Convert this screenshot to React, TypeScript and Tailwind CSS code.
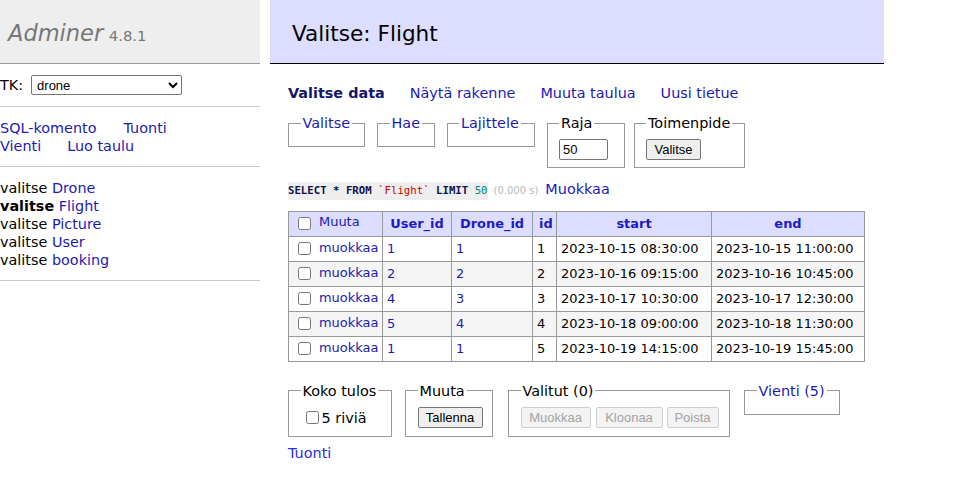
import { ReactNode } from "react";

const link = "text-[#1c1cb0]";

interface Flight {
  userId: number,
  droneId: number,
  id: number,
  start: string,
  end: string,
}

const flights: Flight[] = [
  { userId: 1, droneId: 1, id: 1, start: "2023-10-15 08:30:00", end: "2023-10-15 11:00:00" },
  { userId: 2, droneId: 2, id: 2, start: "2023-10-16 09:15:00", end: "2023-10-16 10:45:00" },
  { userId: 4, droneId: 3, id: 3, start: "2023-10-17 10:30:00", end: "2023-10-17 12:30:00" },
  { userId: 5, droneId: 4, id: 4, start: "2023-10-18 09:00:00", end: "2023-10-18 11:30:00" },
  { userId: 1, droneId: 1, id: 5, start: "2023-10-19 14:15:00", end: "2023-10-19 15:45:00" },
]

export default function App(): ReactNode {
  return (
    <div className="flex items-start bg-white text-black font-['DejaVu_Sans',Verdana,sans-serif] text-[14.4px] leading-[18px]">
      <Sidebar />
      <Content />
    </div>
  )
}

function Sidebar(): ReactNode {
  const tables = ["Drone", "Flight", "Picture", "User", "booking"]

  return (
    <aside className="w-[260px] shrink-0">
      <h1 className="h-[64px] bg-[#eee] border-b border-[#999] pl-[8px] pt-[20px] text-[#777] leading-[27px]">
        <span className="italic text-[22.5px]">Adminer</span>{" "}
        <span className="ml-[1px] text-[14.8px] text-[#777]">4.8.1</span>
      </h1>

      <div className="h-[43px] border-b border-[#ccc] flex items-center">
        <span>TK:</span>
        <select
          defaultValue="drone"
          className="ml-[8px] w-[151px] h-[20px] border border-[#767676] rounded-[2px] bg-white pl-[1px] text-[13px] font-['Liberation_Sans',Arial,sans-serif] text-black"
        >
          <option value="drone">drone</option>
        </select>
      </div>

      <div className="pt-[12px] pb-[11px] border-b border-[#ccc]">
        <div className="flex gap-[27px]">
          <a className={link}>SQL-komento</a>
          <a className={link}>Tuonti</a>
        </div>
        <div className="flex gap-[26px]">
          <a className={link}>Vienti</a>
          <a className={link}>Luo taulu</a>
        </div>
      </div>

      <ul className="pt-[12px] pb-[11px] border-b border-[#ccc]">
        {tables.map((table: string): ReactNode => {
          const active = table == "Flight"
          return (
            <li key={table}>
              <span className={active ? "font-bold" : ""}>valitse</span>{" "}
              <a className={link}>{table}</a>
            </li>
          )
        })}
      </ul>
    </aside>
  )
}

interface BoxProps {
  legend: string,
  isLink?: boolean,
  className?: string,
  children?: ReactNode,
}

function Box({ legend, isLink, className, children }: BoxProps): ReactNode {
  return (
    <fieldset className={`border border-[#999] px-[11.5px] py-[7px] ${className ?? ""}`}>
      <legend className={`px-[2px] ${isLink ? link : ""}`}>{legend}</legend>
      {children}
    </fieldset>
  )
}

interface ButtonProps {
  label: string,
  width: string,
  disabled?: boolean,
}

function Button({ label, width, disabled }: ButtonProps): ReactNode {
  const look = disabled ?
    "text-[#a3a3a3] bg-[#f3f3f3] border-[#cfcfcf]" :
    "text-black bg-[#efefef] border-[#767676]"
  return (
    <button className={`${width} h-[21px] border rounded-[2px] text-[13px] leading-[19px] text-center font-['Liberation_Sans',Arial,sans-serif] ${look}`}>
      {label}
    </button>
  )
}

function Content(): ReactNode {
  return (
    <main className="ml-[10px] w-[614px] shrink-0">
      <h2 className="h-[64px] bg-[#ddf] border-b border-black pl-[22px] pt-[4px] flex items-center text-[21.6px] leading-[27px]">
        Valitse: Flight
      </h2>

      <div className="pl-[18px]">
        <p className="mt-[20px] flex gap-[25px]">
          <a className="font-bold text-[#161668]">Valitse data</a>
          <a className={link}>Näytä rakenne</a>
          <a className={link}>Muuta taulua</a>
          <a className={link}>Uusi tietue</a>
        </p>

        <div className="mt-[12px] flex items-start">
          <Box legend="Valitse" isLink className="mr-[12px] w-[77px]" />
          <Box legend="Hae" isLink className="mr-[12px] w-[57px]" />
          <Box legend="Lajittele" isLink className="mr-[12px] w-[88px]" />
          <Box legend="Raja" className="mr-[9px] w-[78px]">
            <input
              defaultValue="50"
              className="block w-[49px] h-[21px] border border-[#767676] rounded-[2px] px-[3px] text-[13px] font-['Liberation_Sans',Arial,sans-serif]"
            />
          </Box>
          <Box legend="Toimenpide" className="w-[110px]">
            <Button label="Valitse" width="w-[55px]" />
          </Box>
        </div>

        <p className="mt-[11.5px] flex items-baseline">
          <code className="bg-[#eee] font-['DejaVu_Sans_Mono','Liberation_Mono',monospace] text-[10.7px] text-[#10104a]">
            <b>SELECT</b> <b>*</b> <b>FROM</b>{" "}
            <span className="text-[#d00000]">`Flight`</span>{" "}
            <b>LIMIT</b> <span className="text-[#008080]">50</span>
          </code>
          <span className="ml-[6px] text-[10px] text-[#b8b8b8]">(0.000 s)</span>
          <a className={`ml-[7px] ${link}`}>Muokkaa</a>
        </p>

        <FlightTable />

        <div className="mt-[20px] flex items-start">
          <Box legend="Koko tulos" className="mr-[13px] w-[104px]">
            <label className="flex items-center h-[22px] pl-[5px]">
              <input type="checkbox" className="m-0 w-[13px] h-[13px]" />
              <span className="ml-[3px]">5 riviä</span>
            </label>
          </Box>
          <Box legend="Muuta" className="mr-[15px] w-[88px] pr-[9px]">
            <div className="flex items-center h-[22px]">
              <Button label="Tallenna" width="w-[65px]" />
            </div>
          </Box>
          <Box legend="Valitut (0)" className="mr-[14px] w-[222px] pr-[10px]">
            <div className="flex items-center h-[22px]">
              <Button label="Muokkaa" width="w-[70px]" disabled />
              <span className="ml-[5px]" />
              <Button label="Kloonaa" width="w-[67px]" disabled />
              <span className="ml-[4px]" />
              <Button label="Poista" width="w-[52px]" disabled />
            </div>
          </Box>
          <Box legend="Vienti (5)" isLink className="w-[96px]" />
        </div>

        <p className="mt-[7px]">
          <a className="text-[#2b2be0]">Tuonti</a>
        </p>
      </div>
    </main>
  )
}

function FlightTable(): ReactNode {
  const cell = "border border-[#999] px-[4px] h-[25px] align-middle whitespace-nowrap"
  const head = "border border-[#999] px-[6px] h-[25px] align-middle text-center font-bold text-[#1c1cc4]"

  return (
    <table className="mt-[11px] table-fixed w-[576px] border-collapse text-[12.96px] leading-[16px]">
      <colgroup>
        <col className="w-[94px]" />
        <col className="w-[69px]" />
        <col className="w-[81px]" />
        <col className="w-[24px]" />
        <col className="w-[155px]" />
        <col className="w-[153px]" />
      </colgroup>
      <thead className="bg-[#ddf]">
        <tr>
          <td className={cell}>
            <div className="flex items-center">
              <input type="checkbox" className="m-0 ml-[5px] w-[13px] h-[13px]" />
              <a className={`ml-[8px] -mt-[3px] ${link}`}>Muuta</a>
            </div>
          </td>
          <th className={head}>User_id</th>
          <th className={head}>Drone_id</th>
          <th className={head}>id</th>
          <th className={head}>start</th>
          <th className={head}>end</th>
        </tr>
      </thead>
      <tbody>
        {flights.map((flight: Flight, index: number): ReactNode => {
          return (
            <tr key={flight.id} className={index % 2 == 1 ? "bg-[#f5f5f5]" : "bg-white"}>
              <td className={cell}>
                <div className="flex items-center">
                  <input type="checkbox" className="m-0 ml-[5px] w-[13px] h-[13px]" />
                  <a className={`ml-[8px] -mt-[2px] ${link}`}>muokkaa</a>
                </div>
              </td>
              <td className={cell}><a className={link}>{flight.userId}</a></td>
              <td className={cell}><a className={link}>{flight.droneId}</a></td>
              <td className={cell}>{flight.id}</td>
              <td className={cell}>{flight.start}</td>
              <td className={cell}>{flight.end}</td>
            </tr>
          )
        })}
      </tbody>
    </table>
  )
}
